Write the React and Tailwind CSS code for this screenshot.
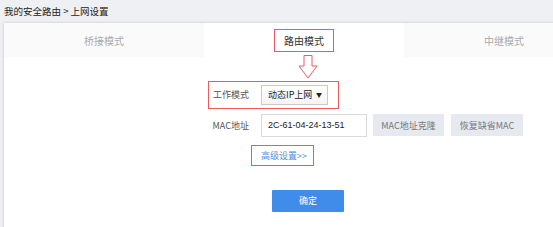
import React from "react";

const font = { fontFamily: '"Noto Sans CJK SC", "Liberation Sans", sans-serif' };

function Tab({ label, active, boxed }) {
  return (
    <div
      className={`w-[200px] shrink-0 h-[34px] flex items-center justify-center ${
        active ? "bg-white" : "bg-[#fafafa]"
      }`}
    >
      {boxed ? (
        <span className="h-[23px] px-[9px] flex items-center border border-[#ee5a62] text-[10px] text-[#333]">
          {label}
        </span>
      ) : (
        <span className="text-[10px] text-[#aaa]">{label}</span>
      )}
    </div>
  );
}

function DownArrow() {
  return (
    <svg width="20" height="24" viewBox="0 0 20 24" className="block">
      <path
        d="M6 0.5 H14 V11 H19 L10 23 L1 11 H6 Z"
        fill="white"
        stroke="#ee5a62"
        strokeWidth="1"
      />
    </svg>
  );
}

export default function App() {
  return (
    <div className="w-[553px] h-[227px] overflow-hidden bg-[#eef0f3] text-[#333]" style={font}>
      {/* Breadcrumb */}
      <div className="h-[23px] pl-[4px] flex items-center text-[9.5px] text-[#222]">
        我的安全路由 &gt; 上网设置
      </div>

      {/* Card */}
      <div className="ml-[4px] w-[602px] h-[210px] bg-white shadow-[0_0_3px_rgba(0,0,0,0.18)]">
        <div className="flex">
          <Tab label="桥接模式" />
          <Tab label="路由模式" active boxed />
          <Tab label="中继模式" />
        </div>

        <div className="flex flex-col">
          <div className="pl-[294px] -mt-[2px]">
            <DownArrow />
          </div>

          {/* Work mode row */}
          <div className="pl-[205px]">
            <div className="inline-flex items-center h-[26px] ring-1 ring-[#ee5a62] w-[129px]">
              <div className="w-[40px] text-right text-[9px] text-[#555]">工作模式</div>
              <div className="ml-[12px] w-[67px] h-[20px] border border-[#c9c9c9] bg-gradient-to-b from-white to-[#f4f4f4] flex items-center justify-between pl-[6px] pr-[5px] text-[9px] text-[#222]">
                <span>动态IP上网</span>
                <span className="text-[6px]">▼</span>
              </div>
            </div>
          </div>

          {/* MAC row */}
          <div className="pl-[205px] mt-[6px] flex items-center">
            <div className="w-[40px] text-right text-[9px] text-[#555]">MAC地址</div>
            <div
              className="ml-[12px] w-[106px] h-[23px] border border-[#dadada] flex items-center pl-[6px] text-[9px] text-[#222]"
              style={{ fontFamily: '"Liberation Sans", sans-serif' }}
            >
              2C-61-04-24-13-51
            </div>
            <button className="ml-[6px] w-[71px] h-[22px] bg-[#e6e9f0] text-[9px] text-[#777]">
              MAC地址克隆
            </button>
            <button className="ml-[7px] w-[72px] h-[22px] bg-[#e6e9f0] text-[9px] text-[#777]">
              恢复缺省MAC
            </button>
          </div>

          {/* Advanced link */}
          <div className="pl-[247px] mt-[3px]">
            <div className="inline-flex items-center h-[21px] w-[63px] pl-[9px] border border-[#ee5a62] text-[9px] text-[#4a90e2]">
              高级设置&gt;&gt;
            </div>
          </div>

          {/* Confirm */}
          <div className="pl-[268px] mt-[19px]">
            <button className="w-[72px] h-[22px] bg-[#3f8ceb] text-white text-[9px] rounded-[1px]">
              确定
            </button>
          </div>
        </div>
      </div>
    </div>
  );
}
